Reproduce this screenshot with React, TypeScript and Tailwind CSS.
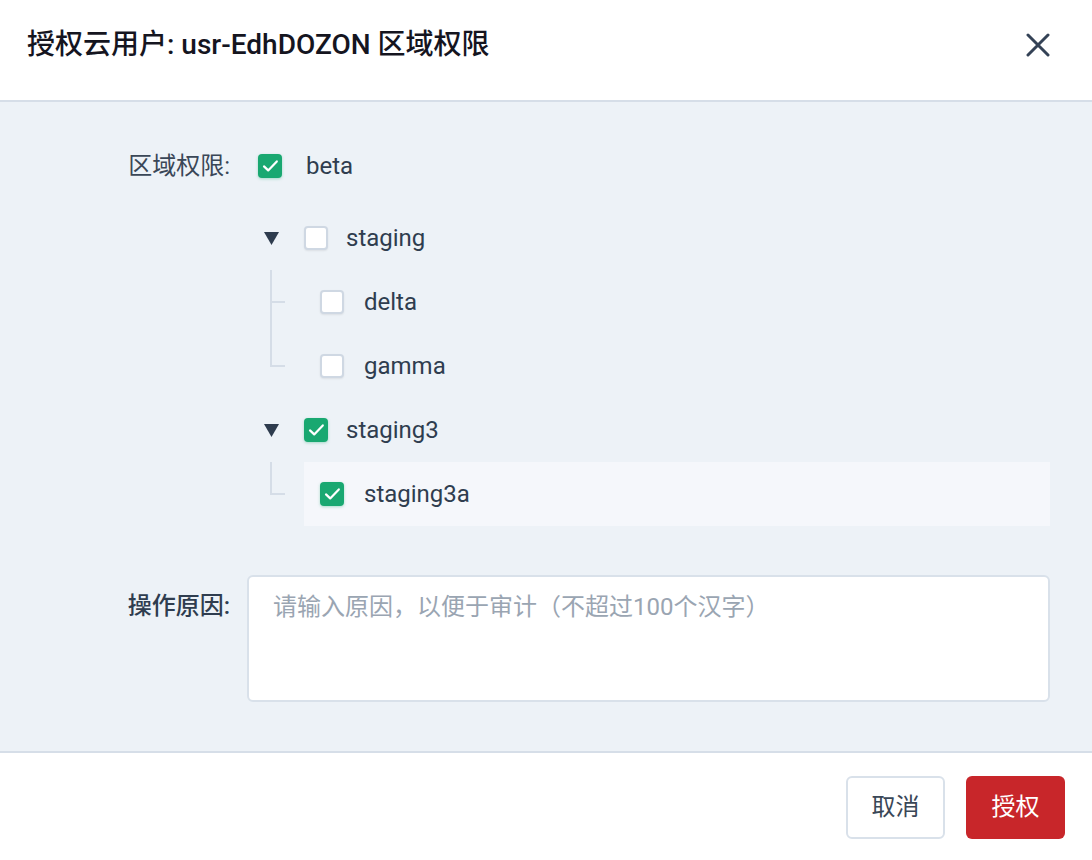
import React from "react";

const font = { fontFamily: 'Roboto, "Noto Sans CJK SC", "Noto Sans", sans-serif' };

function Check({ checked }: { checked: boolean }) {
  if (checked) {
    return (
      <span className="block h-[24px] w-[24px] shrink-0 rounded-[4px] bg-[#19a871] shadow-[0_1px_3px_rgba(25,168,113,0.35)]">
        <svg width="24" height="24" viewBox="0 0 24 24" fill="none">
          <path d="M6 12.4 L10.2 16.4 L18.8 7.4" stroke="white" strokeWidth="2.2" strokeLinecap="round" strokeLinejoin="round" />
        </svg>
      </span>
    );
  }
  return (
    <span className="block h-[24px] w-[24px] shrink-0 rounded-[4px] border-2 border-[#cfd8e3] bg-white shadow-[0_1px_2px_rgba(0,0,0,0.08)]" />
  );
}

function Caret() {
  return (
    <div className="flex w-[57px] shrink-0 justify-start pl-[17px]">
      <svg width="15" height="13" viewBox="0 0 15 13">
        <polygon points="0,0 15,0 7.5,13" fill="#2e3c4e" />
      </svg>
    </div>
  );
}

function Connector({ last }: { last: boolean }) {
  return (
    <div className="flex h-[64px] w-[57px] shrink-0 flex-col pl-[23px]">
      <div className="h-[33px] w-[15px] border-b-2 border-l-2 border-[#d5dde7]" />
      {!last && <div className="h-[31px] w-[15px] border-l-2 border-[#d5dde7]" />}
    </div>
  );
}

function ParentRow({ label, checked }: { label: string; checked: boolean }) {
  return (
    <div className="flex h-[64px] items-center">
      <Caret />
      <Check checked={checked} />
      <span className="ml-[18px] text-[24px] text-[#2f3d4f]">{label}</span>
    </div>
  );
}

function ChildRow({ label, checked, last, active }: { label: string; checked: boolean; last: boolean; active?: boolean }) {
  return (
    <div className="flex h-[64px] items-stretch">
      <Connector last={last} />
      <div className={"flex flex-1 items-center pl-[16px] " + (active ? "bg-[#f5f7fb]" : "")}>
        <Check checked={checked} />
        <span className="ml-[20px] text-[24px] text-[#2f3d4f]">{label}</span>
      </div>
    </div>
  );
}

export default function App() {
  return (
    <div className="flex h-[860px] w-[1092px] flex-col bg-white" style={font}>
      <div className="flex h-[102px] shrink-0 items-center justify-between border-b-2 border-[#d6dee8] pb-[10px] pl-[27px] pr-[42px]">
        <h1 className="text-[28px] font-medium text-[#15151f]">授权云用户: usr-EdhDOZON 区域权限</h1>
        <svg width="24" height="24" viewBox="0 0 24 24" fill="none">
          <path d="M2 2 L22 22 M22 2 L2 22" stroke="#344256" strokeWidth="3" strokeLinecap="round" />
        </svg>
      </div>

      <div className="flex flex-1 flex-col bg-[#edf2f7] pb-[49px] pr-[42px] pt-[32px]">
        <div className="flex">
          <div className="flex h-[64px] w-[247px] shrink-0 items-center justify-end pr-[17px] text-[24px] text-[#3a4757]">
            区域权限:
          </div>
          <div className="flex flex-1 flex-col">
            <div className="flex h-[64px] items-center pl-[11px]">
              <Check checked={true} />
              <span className="ml-[24px] text-[24px] text-[#2f3d4f]">beta</span>
            </div>
            <div className="mt-[8px] flex flex-col">
              <ParentRow label="staging" checked={false} />
              <ChildRow label="delta" checked={false} last={false} />
              <ChildRow label="gamma" checked={false} last={true} />
              <ParentRow label="staging3" checked={true} />
              <ChildRow label="staging3a" checked={true} last={true} active />
            </div>
          </div>
        </div>

        <div className="mt-[49px] flex">
          <div className="w-[247px] shrink-0 pr-[17px] pt-[13px] text-right text-[24px] font-medium text-[#2f3d4f]">
            操作原因:
          </div>
          <div className="h-[127px] flex-1 rounded-[6px] border-2 border-[#d9e1ea] bg-white px-[24px] pt-[12px] text-[24px] text-[#9aa5b2]">
            请输入原因，以便于审计（不超过100个汉字）
          </div>
        </div>
      </div>

      <div className="flex h-[110px] shrink-0 items-center justify-end gap-[21px] border-t-2 border-[#d6dee8] pr-[27px]">
        <button className="h-[63px] w-[99px] rounded-[6px] border-2 border-[#d9e1ea] bg-white text-[24px] text-[#3a4757]">取消</button>
        <button className="h-[63px] w-[99px] rounded-[6px] bg-[#c8262a] text-[24px] text-white">授权</button>
      </div>
    </div>
  );
}
